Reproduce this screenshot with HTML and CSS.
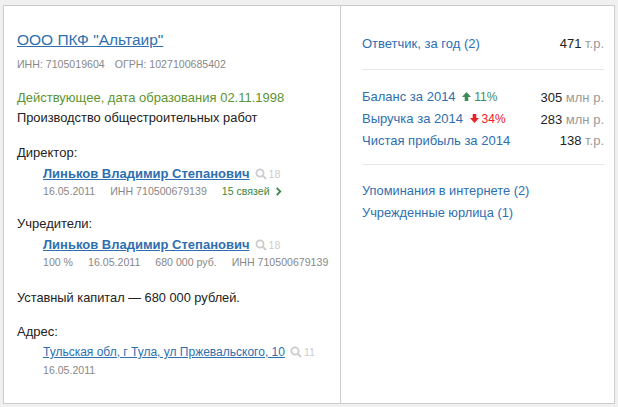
FILE: index.html
```html
<!DOCTYPE html>
<html lang="ru">
<head>
    <meta charset="UTF-8">
    <title>ООО ПКФ "Альтаир"</title>
    <link rel="stylesheet" href="styles.css">
</head>
<body>
    <main class="card">
        <section class="info">
            <h1 class="title"><a href="#">ООО ПКФ "Альтаир"</a></h1>
            <p class="codes"><span>ИНН: 7105019604</span><span>ОГРН: 1027100685402</span></p>

            <p class="status">Действующее, дата образования 02.11.1998</p>
            <p class="activity">Производство общестроительных работ</p>

            <div class="block director">
                <p class="label">Директор:</p>
                <div class="person">
                    <a class="name" href="#">Линьков Владимир Степанович</a>
                    <span class="search">
                        <svg viewBox="0 0 12 12"><circle cx="5" cy="5" r="3.6"/><path d="M7.7 7.7 11 11"/></svg>18
                    </span>
                </div>
                <p class="meta">
                    <span>16.05.2011</span><span>ИНН 710500679139</span>
                    <a class="links" href="#">15 связей <svg viewBox="0 0 7 10"><path d="M1.5 1 5.5 5 1.5 9"/></svg></a>
                </p>
            </div>

            <div class="block founders">
                <p class="label">Учредители:</p>
                <div class="person">
                    <a class="name" href="#">Линьков Владимир Степанович</a>
                    <span class="search">
                        <svg viewBox="0 0 12 12"><circle cx="5" cy="5" r="3.6"/><path d="M7.7 7.7 11 11"/></svg>18
                    </span>
                </div>
                <p class="meta">
                    <span>100 %</span><span>16.05.2011</span><span>680 000 руб.</span><span>ИНН 710500679139</span>
                </p>
            </div>

            <p class="capital">Уставный капитал — 680 000 рублей.</p>

            <div class="block address">
                <p class="label">Адрес:</p>
                <div class="person">
                    <a class="street" href="#">Тульская обл, г Тула, ул Пржевальского, 10</a>
                    <span class="search small">
                        <svg viewBox="0 0 12 12"><circle cx="5" cy="5" r="3.6"/><path d="M7.7 7.7 11 11"/></svg>11
                    </span>
                </div>
                <p class="meta"><span>16.05.2011</span></p>
            </div>
        </section>

        <aside class="side">
            <ul class="rows">
                <li><a href="#">Ответчик, за год (2)</a><b>471 <i>т.р.</i></b></li>
            </ul>
            <ul class="rows finance">
                <li>
                    <span><a href="#">Баланс за 2014</a>
                    <em class="up"><svg viewBox="0 0 9 9"><path d="M4.5 0 9 5H6.3V9H2.7V5H0Z"/></svg>11%</em></span>
                    <b>305 <i>млн р.</i></b>
                </li>
                <li>
                    <span><a href="#">Выручка за 2014</a>
                    <em class="down"><svg viewBox="0 0 9 9"><path d="M4.5 9 9 4H6.3V0H2.7V4H0Z"/></svg>34%</em></span>
                    <b>283 <i>млн р.</i></b>
                </li>
                <li><a href="#">Чистая прибыль за 2014</a><b>138 <i>т.р.</i></b></li>
            </ul>
            <ul class="rows extra">
                <li><a href="#">Упоминания в интернете (2)</a></li>
                <li><a href="#">Учрежденные юрлица (1)</a></li>
            </ul>
        </aside>
    </main>
</body>
</html>
```

FILE: styles.css
```css
* {
    box-sizing: border-box;
}

body {
    margin: 0;
    height: 407px;
    padding: 5px 3px 3px 3px;
    overflow: hidden;
    background: #f0f0f0;
    font-family: "Liberation Sans", Arial, sans-serif;
    font-size: 13px;
    color: #222;
}

p, h1, ul {
    margin: 0;
    padding: 0;
}

a {
    color: #2e6fb0;
}

.card {
    display: flex;
    height: 399px;
    background: #fff;
    border: 1px solid #ccc;
}

.info {
    width: 337px;
    padding: 24px 0 0 13px;
    border-right: 1px solid #ccc;
}

.title {
    font-size: 15.5px;
    font-weight: normal;
    line-height: 20px;
}

.codes {
    margin-top: 7px;
    font-size: 10.6px;
    line-height: 14px;
    color: #888;
}

.codes span {
    margin-right: 10px;
}

.status {
    margin-top: 17px;
    line-height: 20px;
    color: #5c9431;
}

.activity {
    font-size: 12.85px;
    line-height: 20px;
}

.block {
    margin-top: 15px;
}

.founders {
    margin-top: 16px;
}

.address {
    margin-top: 14px;
}

.label {
    line-height: 20px;
}

.person {
    display: flex;
    align-items: center;
    margin-left: 26px;
    margin-top: 2px;
    line-height: 18px;
}

.address .person {
    margin-top: 1px;
}

.name {
    font-weight: bold;
}

.street {
    font-size: 12px;
}

.search {
    display: flex;
    align-items: center;
    margin-left: 5px;
    font-size: 10.6px;
    color: #ccc;
}

.search svg {
    width: 12px;
    height: 12px;
    margin-right: 2px;
    fill: none;
    stroke: #ccc;
    stroke-width: 1.8;
}

.meta {
    display: flex;
    align-items: center;
    margin-left: 26px;
    margin-top: 1px;
    font-size: 10.6px;
    line-height: 14px;
    white-space: nowrap;
    color: #888;
}

.meta span {
    margin-right: 15px;
}

.meta span:last-child {
    margin-right: 0;
}

.links {
    display: flex;
    align-items: center;
    color: #3a8a45;
    text-decoration: none;
}

.links svg {
    width: 7px;
    height: 9px;
    margin-left: 5px;
    fill: none;
    stroke: #3a8a45;
    stroke-width: 2;
}

.capital {
    margin-top: 19px;
    font-size: 12.8px;
    line-height: 20px;
}

.address .meta {
    margin-top: 2px;
}

.side {
    flex: 1;
    padding: 27px 10px 0 21px;
}

.rows {
    list-style: none;
}

.rows li {
    display: flex;
    justify-content: space-between;
    align-items: center;
    line-height: 21px;
}

.rows a {
    text-decoration: none;
}

.rows b {
    font-weight: normal;
}

.rows i {
    font-style: normal;
    color: #999;
}

.finance {
    margin-top: 15px;
    padding-top: 16px;
    border-top: 1px solid #e6e6e6;
}

.rows em {
    font-style: normal;
    font-size: 12px;
    margin-left: 3px;
}

.rows em svg {
    width: 9px;
    height: 9px;
    margin-right: 3px;
    fill: currentColor;
}

.up {
    color: #3f8a5a;
}

.down {
    color: #e8202a;
}

.extra {
    margin-top: 13px;
    padding-top: 15px;
    border-top: 1px solid #e6e6e6;
}

.extra li {
    font-size: 12.85px;
    line-height: 22px;
}
```
